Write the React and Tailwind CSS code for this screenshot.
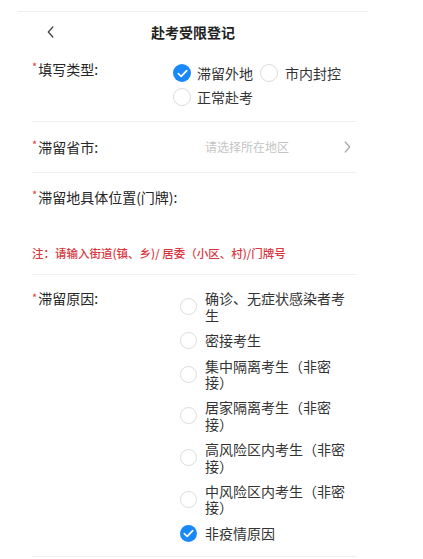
import React from "react";

const FONT = { fontFamily: '"Noto Sans CJK SC", "Noto Sans", "Liberation Sans", sans-serif' };

function Radio({ checked, size = 18 }) {
  if (checked) {
    return (
      <span
        className="shrink-0 rounded-full bg-[#1989fa] flex items-center justify-center"
        style={{ width: size, height: size }}
      >
        <svg width="11" height="9" viewBox="0 0 11 9" fill="none">
          <path d="M1.3 4.6 L4.2 7.3 L9.7 1.6" stroke="#fff" strokeWidth="1.7" strokeLinecap="round" strokeLinejoin="round" />
        </svg>
      </span>
    );
  }
  return (
    <span
      className="shrink-0 rounded-full border border-[#dcdcdc] bg-white"
      style={{ width: size, height: size }}
    />
  );
}

function Label({ children, className = "" }) {
  return (
    <div className={"flex text-[14px] text-[#262626] " + className}>
      <span className="text-[#e4393c] text-[11px] leading-[12px] mr-[1px] mt-[1px]">*</span>
      <span>{children}</span>
    </div>
  );
}

const reasons = [
  { t: "确诊、无症状感染者考生" },
  { t: "密接考生" },
  { t: "集中隔离考生（非密接）" },
  { t: "居家隔离考生（非密接）" },
  { t: "高风险区内考生（非密接）" },
  { t: "中风险区内考生（非密接）" },
  { t: "非疫情原因", checked: true },
];

export default function App() {
  return (
    <div className="min-h-screen bg-white" style={FONT}>
      <div className="ml-[18px] w-[350px] pt-[11px]">
        <div className="border-t border-[#efefef]">
          <div className="h-[40px] grid grid-cols-[1fr_auto_1fr] items-center">
            <div className="pl-[29px] flex items-center">
              <svg width="7" height="12" viewBox="0 0 7 12" fill="none">
                <path d="M5.8 1 L1.3 6 L5.8 11" stroke="#444" strokeWidth="1.3" strokeLinecap="round" strokeLinejoin="round" />
              </svg>
            </div>
            <div className="text-[14px] font-bold text-[#222] leading-[20px]">赴考受限登记</div>
            <div />
          </div>

          <div className="pl-[14px] pr-[11px]">
            {/* 填写类型 */}
            <div className="flex pt-[7px] pb-[12px] border-b border-[#f0f0f0]">
              <Label className="w-[141px] shrink-0 leading-[20px]">填写类型:</Label>
              <div className="flex flex-wrap mt-[2px] flex-1">
                <div className="h-[24px] flex items-center gap-[6px] mr-[7px]">
                  <Radio checked />
                  <span className="text-[14px] text-[#333]">滞留外地</span>
                </div>
                <div className="h-[24px] flex items-center gap-[7px] mr-[7px]">
                  <Radio />
                  <span className="text-[14px] text-[#333]">市内封控</span>
                </div>
                <div className="h-[24px] flex items-center gap-[6px] mr-[7px]">
                  <Radio />
                  <span className="text-[14px] text-[#333]">正常赴考</span>
                </div>
              </div>
            </div>

            {/* 滞留省市 */}
            <div className="h-[51px] flex items-center border-b border-[#f0f0f0]">
              <Label className="w-[173px] shrink-0 leading-[20px]">滞留省市:</Label>
              <span className="flex-1 text-[12px] text-[#c4c4c4]">请选择所在地区</span>
              <svg className="mr-[6px]" width="7" height="12" viewBox="0 0 7 12" fill="none">
                <path d="M1.2 1 L5.7 6 L1.2 11" stroke="#a8a8a8" strokeWidth="1.2" strokeLinecap="round" strokeLinejoin="round" />
              </svg>
            </div>

            {/* 具体位置 */}
            <div className="pt-[14px] pb-[13px] border-b border-[#f0f0f0]">
              <Label className="leading-[20px]">滞留地具体位置(门牌):</Label>
              <div className="mt-[38px] text-[11.5px] leading-[16px] text-[#d9363e] font-medium">
                注：请输入街道(镇、乡)/ 居委（小区、村)/门牌号
              </div>
            </div>

            {/* 滞留原因 */}
            <div className="flex pt-[15px] pb-[14px] border-b border-[#f0f0f0]">
              <Label className="w-[148px] shrink-0 leading-[17px]">滞留原因:</Label>
              <div className="flex flex-col gap-[8.75px]">
                {reasons.map((r, i) => (
                  <div key={i} className="flex items-center gap-[8px]">
                    <Radio checked={r.checked} size={17} />
                    <span className="w-[143px] text-[14px] leading-[16.5px] text-[#333]">{r.t}</span>
                  </div>
                ))}
              </div>
            </div>
          </div>
        </div>
      </div>
    </div>
  );
}
